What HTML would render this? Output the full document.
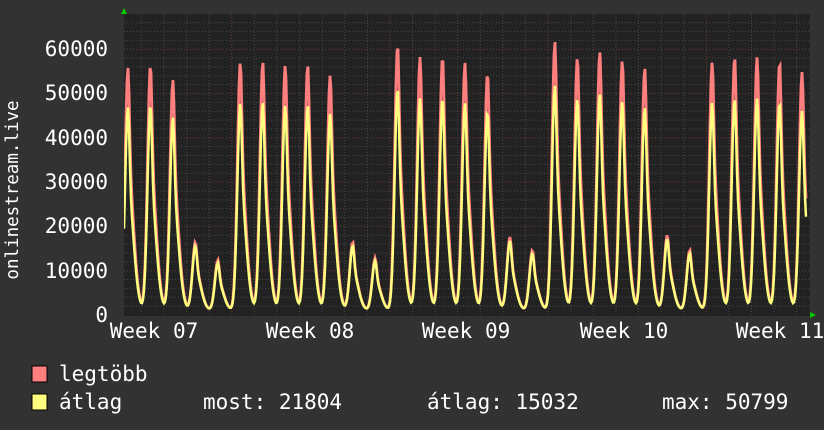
<!DOCTYPE html>
<html><head><meta charset="utf-8"><style>
html,body{margin:0;padding:0;background:#323232;width:824px;height:430px;overflow:hidden}
svg{display:block}
text{font-family:"DejaVu Sans Mono","Liberation Mono",monospace;fill:#fff}
</style></head><body>
<svg id="g" width="824" height="430" viewBox="0 0 824 430">
<defs><clipPath id="pc"><rect x="124" y="14" width="686" height="302"/></clipPath></defs>
<rect x="0" y="0" width="824" height="430" fill="#323232"/>
<rect x="124" y="14" width="686" height="302" fill="#222"/>
<g id="grid"></g>
<g id="data" clip-path="url(#pc)"></g>
<polygon points="121,14 127,14 124,8" fill="#0c0"/>
<polygon points="810,312 810,318 816,315" fill="#0c0"/>
<g font-size="21" text-anchor="end">
<text x="108" y="56">60000</text>
<text x="108" y="100">50000</text>
<text x="108" y="145">40000</text>
<text x="108" y="189">30000</text>
<text x="108" y="233">20000</text>
<text x="108" y="278">10000</text>
<text x="108" y="322">0</text>
</g>
<text transform="translate(18,190) rotate(-90)" font-size="17.5" text-anchor="middle">onlinestream.live</text>
<g font-size="21" text-anchor="middle">
<text x="154" y="338">Week 07</text>
<text x="310" y="338">Week 08</text>
<text x="466" y="338">Week 09</text>
<text x="624" y="338">Week 10</text>
<text x="780" y="338">Week 11</text>
</g>
<rect x="32" y="366" width="15" height="16" fill="#ff7f7f" stroke="#000" stroke-width="1"/>
<rect x="32" y="394" width="15" height="16" fill="#ffff7f" stroke="#000" stroke-width="1"/>
<g font-size="21">
<text x="59" y="381">legtöbb</text>
<text x="59" y="409">átlag</text>
<text x="203" y="409">most: 21804</text>
<text x="427" y="409">átlag: 15032</text>
<text x="662" y="409">max: 50799</text>
</g>
</svg>
<script>
var NS="http://www.w3.org/2000/svg";
function el(t,a,p){var e=document.createElementNS(NS,t);for(var k in a)e.setAttribute(k,a[k]);p.appendChild(e);return e;}
var grid=document.getElementById("grid");
function Y(v){return 315-v/10000*44.3;}
for(var v=2000;v<=68000;v+=2000){var y=Y(v);if(y<14)break;
 el("line",{x1:124,x2:810,y1:y,y2:y,stroke:(v%10000==0)?"#6a3a3a":"#484848","stroke-dasharray":"1,2","stroke-width":1},grid);}
for(var x=231.7-22.6*4;x<810;x+=22.6){if(x<125)continue;
 var maj=Math.abs(((x-231.7)/158.2)-Math.round((x-231.7)/158.2))<0.02;
 el("line",{x1:x,x2:x,y1:14,y2:316,stroke:maj?"#6a3a3a":"#484848","stroke-dasharray":"1,2","stroke-width":1},grid);}
var ry=[68,65,80,242,260,62,62,65,65,75,242,258,45,57,57,63,73,237,250,42,57,52,60,68,235,250,62,57,57,62,72];
var px=[];for(var i=0;i<31;i++)px.push(128+22.47*i);
function shape(dx){ if(dx<0){return Math.exp(-Math.pow(dx/4.2,2));}
 return 0.4*Math.exp(-Math.pow(dx/2,2))+0.6*Math.exp(-Math.pow(dx/7.6,2));}
function val(x,avg){var b=1000,s=b;for(var i=0;i<31;i++){var peak=(315-ry[i])/44.3*10000;
 if(avg)peak*=(peak<20000?0.95:0.84);s+=(peak-b)*shape(x-px[i]);}return s;}
var d=document.getElementById("data");
function path(avg){var p="";for(var x=124;x<=806;x+=1){p+=(x==124?"M":"L")+x+","+Y(val(x,avg)).toFixed(1);}return p;}
el("path",{d:path(false),fill:"none",stroke:"#ff7f7f","stroke-width":2.8},d);
el("path",{d:path(true),fill:"none",stroke:"#ffff7f","stroke-width":2.5},d);
</script>
</body></html>
